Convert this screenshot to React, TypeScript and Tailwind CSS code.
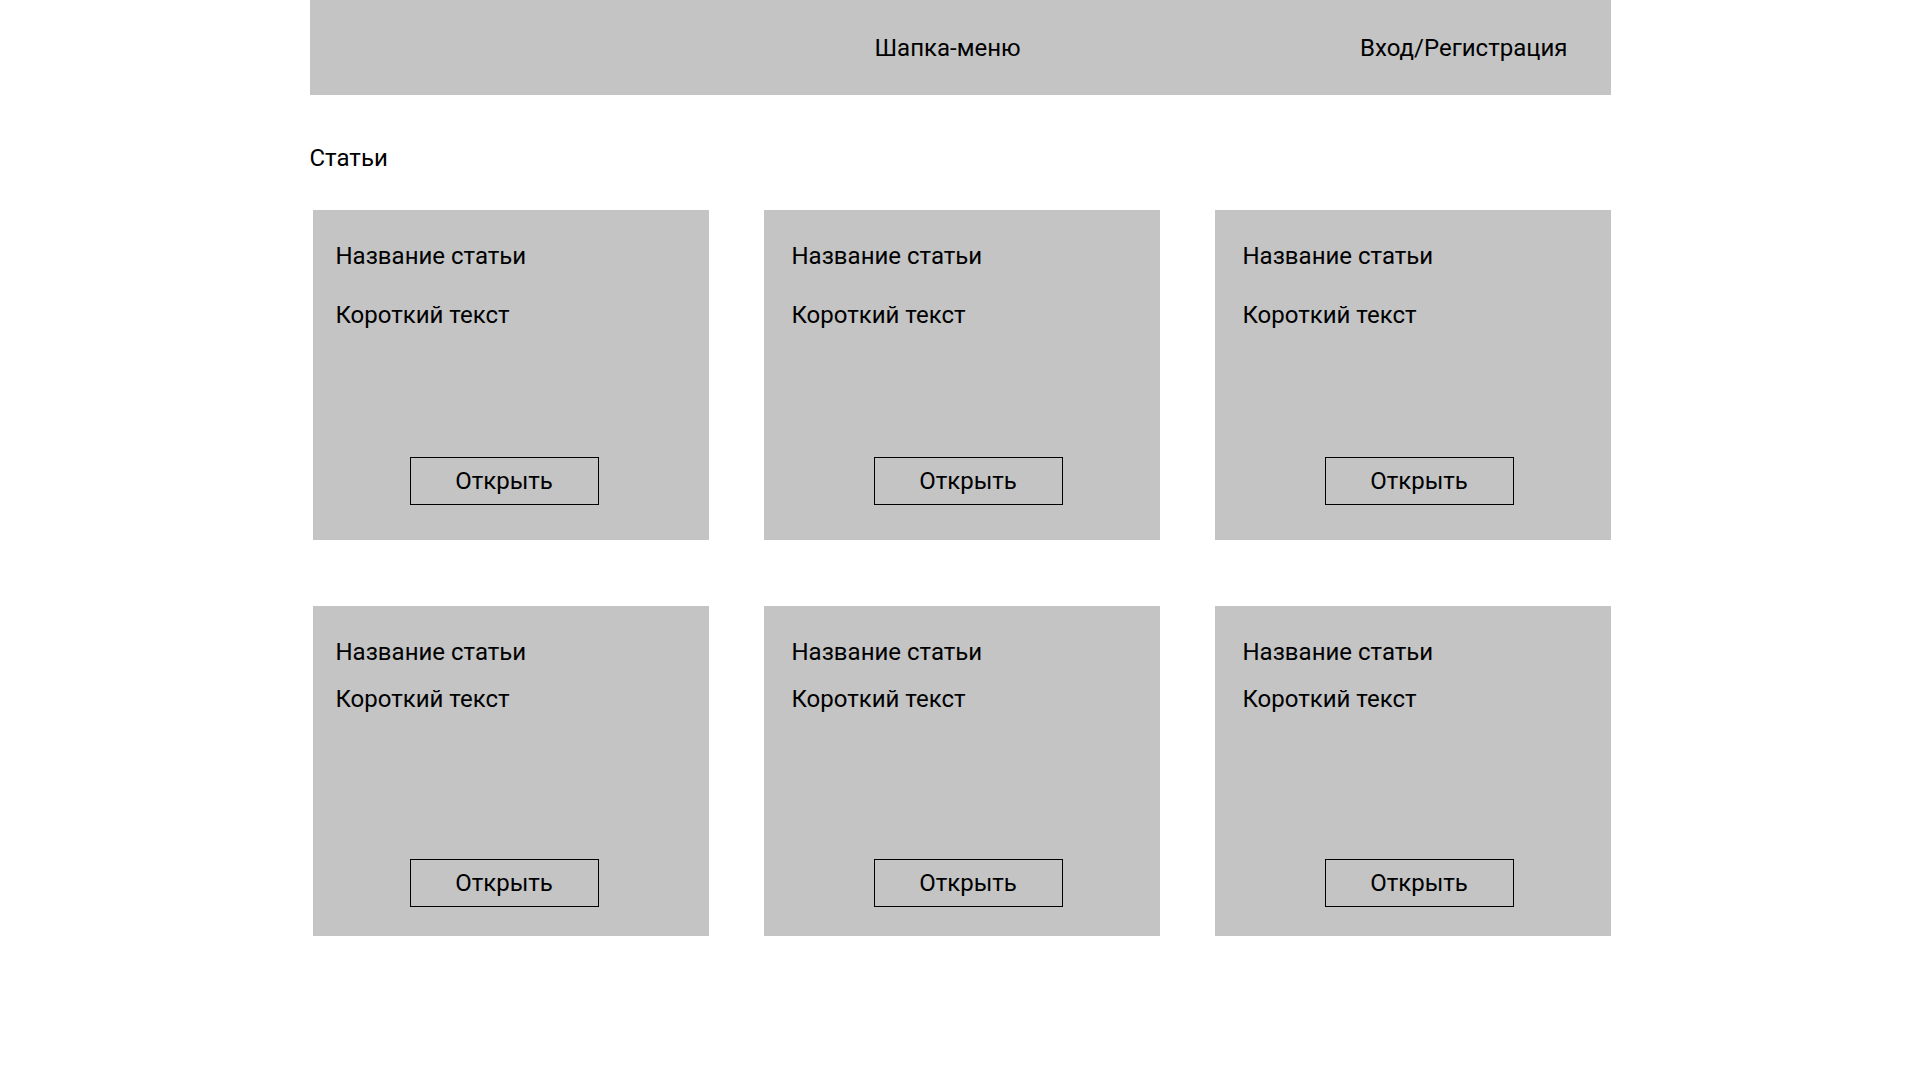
const articles = [
  { row: 0, padLeft: "pl-[23px]", btnLeft: "ml-[74px]" },
  { row: 0, padLeft: "pl-[28px]", btnLeft: "ml-[82px]" },
  { row: 0, padLeft: "pl-[28px]", btnLeft: "ml-[82px]" },
  { row: 1, padLeft: "pl-[23px]", btnLeft: "ml-[74px]" },
  { row: 1, padLeft: "pl-[28px]", btnLeft: "ml-[82px]" },
  { row: 1, padLeft: "pl-[28px]", btnLeft: "ml-[82px]" },
];

const ArticleCard = ({
  row,
  padLeft,
  btnLeft,
}: {
  row: number;
  padLeft: string;
  btnLeft: string;
}) => {
  return (
    <div className={`h-[330px] bg-[#c4c4c4] pt-[32px] flex flex-col items-start ${padLeft}`}>
      <h3 className="leading-[28px]">Название статьи</h3>
      <p className={`leading-[28px] ${row === 0 ? "mt-[31px]" : "mt-[19px]"}`}>
        Короткий текст
      </p>
      <button
        className={`w-[189px] h-[48px] border border-black flex items-center justify-center leading-[28px] ${btnLeft} ${
          row === 0 ? "mt-[128px]" : "mt-[146px]"
        }`}
      >
        Открыть
      </button>
    </div>
  );
};

const App = () => {
  return (
    <div
      className="min-h-screen bg-white text-black text-[24px]"
      style={{ fontFamily: "Roboto, 'Liberation Sans', sans-serif" }}
    >
      <div className="w-[1301px] mx-auto">
        {/* Шапка */}
        <header className="h-[95px] bg-[#c4c4c4] flex items-center pl-[565px] pr-[43px]">
          <span className="leading-[28px]">Шапка-меню</span>
          <div className="flex-1" />
          <a href="#" className="leading-[28px]">
            Вход/Регистрация
          </a>
        </header>

        <h2 className="mt-[49px] leading-[28px]">Статьи</h2>

        {/* Карточки статей */}
        <div className="mt-[38px] pl-[3px] grid grid-cols-[396px_396px_396px] gap-x-[55px] gap-y-[66px]">
          {articles.map((a, i) => (
            <ArticleCard key={i} {...a} />
          ))}
        </div>
      </div>
    </div>
  );
};

export default App;
